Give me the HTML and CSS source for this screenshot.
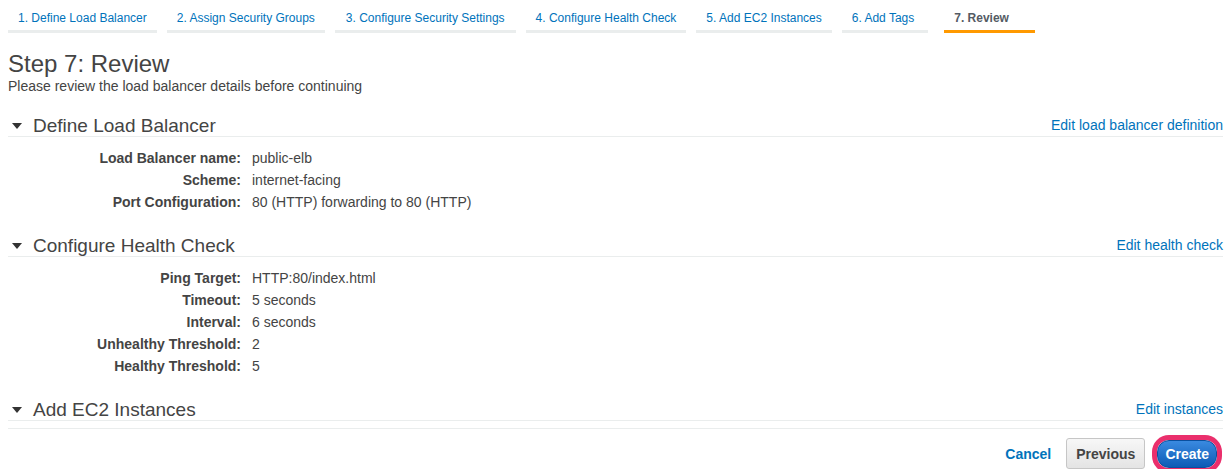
FILE: index.html
```html
<!DOCTYPE html>
<html>
<head>
<meta charset="utf-8">
<link rel="stylesheet" href="styles.css">
</head>
<body>
<div class="page">
  <nav class="tabs">
    <a class="tab">1. Define Load Balancer</a>
    <a class="tab">2. Assign Security Groups</a>
    <a class="tab">3. Configure Security Settings</a>
    <a class="tab">4. Configure Health Check</a>
    <a class="tab">5. Add EC2 Instances</a>
    <a class="tab">6. Add Tags</a>
    <a class="tab active">7. Review</a>
  </nav>

  <h1 class="title">Step 7: Review</h1>
  <p class="subtitle">Please review the load balancer details before continuing</p>

  <section class="section">
    <div class="section-head">
      <h2 class="section-title"><span class="caret"></span>Define Load Balancer</h2>
      <a class="edit">Edit load balancer definition</a>
    </div>
    <div class="section-body">
      <div class="row"><span class="label">Load Balancer name:</span><span class="value">public-elb</span></div>
      <div class="row"><span class="label">Scheme:</span><span class="value">internet-facing</span></div>
      <div class="row"><span class="label">Port Configuration:</span><span class="value">80 (HTTP) forwarding to 80 (HTTP)</span></div>
    </div>
  </section>

  <section class="section">
    <div class="section-head">
      <h2 class="section-title"><span class="caret"></span>Configure Health Check</h2>
      <a class="edit">Edit health check</a>
    </div>
    <div class="section-body">
      <div class="row"><span class="label">Ping Target:</span><span class="value">HTTP:80/index.html</span></div>
      <div class="row"><span class="label">Timeout:</span><span class="value">5 seconds</span></div>
      <div class="row"><span class="label">Interval:</span><span class="value">6 seconds</span></div>
      <div class="row"><span class="label">Unhealthy Threshold:</span><span class="value">2</span></div>
      <div class="row"><span class="label">Healthy Threshold:</span><span class="value">5</span></div>
    </div>
  </section>

  <section class="section last">
    <div class="section-head">
      <h2 class="section-title"><span class="caret"></span>Add EC2 Instances</h2>
      <a class="edit">Edit instances</a>
    </div>
  </section>

  <footer class="footer">
    <a class="cancel">Cancel</a>
    <button class="btn btn-prev">Previous</button>
    <button class="btn btn-create">Create</button>
  </footer>
</div>
</body>
</html>
```

FILE: styles.css
```css
html, body {
  margin: 0;
  padding: 0;
  background: #ffffff;
}

body {
  font-family: "Liberation Sans", Arial, Helvetica, sans-serif;
  color: #444444;
}

.page {
  padding: 0 8px;
}

.tabs {
  display: flex;
  gap: 10px;
}

.tab {
  display: block;
  padding: 11px 10px 5px;
  font-size: 12px;
  line-height: 14px;
  color: #0073bb;
  border-bottom: 3px solid #eaeded;
  white-space: nowrap;
}

.tab:nth-child(3) {
  padding-left: 11px;
  padding-right: 11px;
}

.tab:nth-child(6) {
  padding-right: 14px;
}

.tab.active {
  color: #545b64;
  font-weight: bold;
  border-bottom-color: #ff9900;
  padding-left: 10px;
  padding-right: 26px;
  margin-left: 6px;
}

.title {
  margin: 17px 0 0;
  font-size: 24px;
  font-weight: normal;
  line-height: 28px;
  color: #444444;
}

.subtitle {
  margin: 0;
  font-size: 14px;
  line-height: 16px;
  color: #444444;
}

.section-head {
  display: flex;
  justify-content: space-between;
  align-items: flex-end;
  border-bottom: 1px solid #eaeded;
}

.section:first-of-type .section-head {
  margin-top: 21px;
}

.section-title {
  margin: 0;
  display: flex;
  align-items: center;
  font-size: 19px;
  font-weight: normal;
  line-height: 21px;
  color: #444444;
}

.caret {
  width: 0;
  height: 0;
  margin: 1px 11px 0 4px;
  border-left: 5px solid transparent;
  border-right: 5px solid transparent;
  border-top: 6px solid #333333;
}

.edit {
  font-size: 14px;
  line-height: 20px;
  color: #0073bb;
  padding-bottom: 1px;
}

.section-body {
  padding: 10px 0 22px;
}

.row {
  display: grid;
  grid-template-columns: 233px 1fr;
  column-gap: 11px;
  font-size: 14px;
  line-height: 22px;
  color: #444444;
}

.label {
  text-align: right;
  font-weight: bold;
}

.footer {
  margin-top: 7px;
  border-top: 1px solid #eaeded;
  display: flex;
  justify-content: flex-end;
  align-items: center;
  padding: 9px 0 0;
}

.cancel {
  font-size: 14px;
  font-weight: bold;
  color: #0073bb;
  margin-right: 15px;
}

.btn {
  font-family: "Liberation Sans", Arial, Helvetica, sans-serif;
  font-size: 14px;
  font-weight: bold;
  cursor: pointer;
}

.btn-prev {
  height: 31px;
  padding: 0 9px;
  border: 1px solid #c6c6c6;
  border-radius: 3px;
  background: linear-gradient(#f7f7f7, #e4e4e4);
  color: #444444;
  margin-right: 12px;
}

.btn-create {
  height: 28px;
  padding: 0 7px;
  border: 1px solid #0a4f9e;
  border-radius: 12px;
  background: linear-gradient(#3a8ae0, #0d5bb5);
  color: #ffffff;
  box-shadow: 0 0 0 5px #ea2f6c;
  margin-right: 6px;
}
```
